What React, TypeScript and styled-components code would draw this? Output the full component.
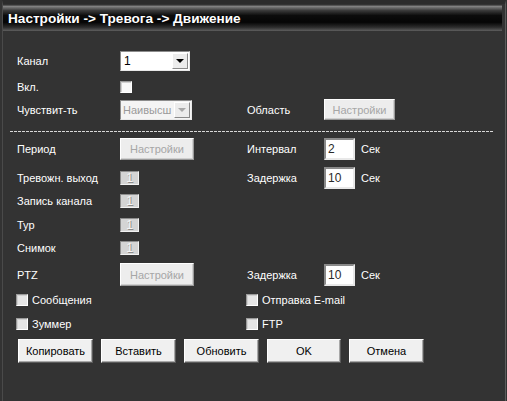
import styled, { createGlobalStyle } from 'styled-components';

const GlobalStyle = createGlobalStyle`
  html, body {
    margin: 0;
    padding: 0;
    background: #333333;
  }
  body {
    font-family: 'Liberation Sans', Arial, sans-serif;
    font-size: 11px;
    color: #ffffff;
  }
`;

type RowSpec = { top: number; height: number };

const TextRow = ({
  label,
  top,
  height,
  children,
  right,
}: RowSpec & { label: string; children?: React.ReactNode; right?: React.ReactNode }) => (
  <Row $top={top} $height={height}>
    <Label>{label}</Label>
    <Cell>{children}</Cell>
    {right}
  </Row>
);

const SecondsField = ({ label, value }: { label: string; value: string }) => (
  <>
    <Label>{label}</Label>
    <Cell>
      <NumberInput defaultValue={value} />
      <Unit>Сек</Unit>
    </Cell>
  </>
);

const MiniBox = () => <Mini>1</Mini>;

const App = () => {
  return (
    <>
      <GlobalStyle />
      <Window>
        <TitleBar>Настройки -&gt; Тревога -&gt; Движение</TitleBar>
        <Form>
          <TextRow label="Канал" top={0} height={20}>
            <Select>
              <SelectValue>1</SelectValue>
              <ArrowButton>
                <Arrow />
              </ArrowButton>
            </Select>
          </TextRow>
          <TextRow label="Вкл." top={9} height={13}>
            <CheckBox />
          </TextRow>
          <TextRow
            label="Чувствит-ть"
            top={6}
            height={20}
            right={
              <>
                <Label>Область</Label>
                <Cell>
                  <Button $width={71} $height={21} disabled>
                    Настройки
                  </Button>
                </Cell>
              </>
            }
          >
            <Select $disabled>
              <SelectValue $disabled>Наивысш</SelectValue>
              <ArrowButton>
                <Arrow $disabled />
              </ArrowButton>
            </Select>
          </TextRow>

          <Divider />

          <TextRow
            label="Период"
            top={6}
            height={22}
            right={<SecondsField label="Интервал" value="2" />}
          >
            <Button $width={74} $height={22} disabled>
              Настройки
            </Button>
          </TextRow>
          <TextRow
            label="Тревожн. выход"
            top={7}
            height={22}
            right={<SecondsField label="Задержка" value="10" />}
          >
            <MiniBox />
          </TextRow>
          <TextRow label="Запись канала" top={5} height={14}>
            <MiniBox />
          </TextRow>
          <TextRow label="Тур" top={10} height={13}>
            <MiniBox />
          </TextRow>
          <TextRow label="Снимок" top={10} height={14}>
            <MiniBox />
          </TextRow>
          <TextRow
            label="PTZ"
            top={8}
            height={23}
            right={<SecondsField label="Задержка" value="10" />}
          >
            <Button $width={74} $height={23} disabled>
              Настройки
            </Button>
          </TextRow>

          <CheckRow $top={8}>
            <CheckLabel>
              <CheckBox $shade />
              Сообщения
            </CheckLabel>
            <CheckLabel>
              <CheckBox $shade />
              Отправка E-mail
            </CheckLabel>
          </CheckRow>
          <CheckRow $top={12}>
            <CheckLabel>
              <CheckBox $shade />
              Зуммер
            </CheckLabel>
            <CheckLabel>
              <CheckBox $shade />
              FTP
            </CheckLabel>
          </CheckRow>

          <ButtonBar>
            <Button $width={75} $height={24}>Копировать</Button>
            <Button $width={75} $height={24}>Вставить</Button>
            <Button $width={75} $height={24}>Обновить</Button>
            <Button $width={74} $height={24}>OK</Button>
            <Button $width={75} $height={24}>Отмена</Button>
          </ButtonBar>
        </Form>
      </Window>
    </>
  );
};

export default App;

const Window = styled.div`
  box-sizing: border-box;
  width: 504px;
  height: 401px;
  margin-left: 2px;
  border-left: 1px solid #4a4a4a;
  border-right: 1px solid #5c5c5c;
  border-top: 4px solid #2c2c2c;
  background: #333333;
  overflow: hidden;
`;

const TitleBar = styled.div`
  height: 25px;
  margin-top: 1px;
  margin-right: 3px;
  padding-left: 5px;
  display: flex;
  align-items: center;
  border-top: 1px solid #555;
  background: linear-gradient(
    to bottom,
    #8a8a8a 0%,
    #3a3a3a 18%,
    #0c0c0c 38%,
    #050505 65%,
    #2c2c2c 85%,
    #5e5e5e 100%
  );
  color: #ffffff;
  font-weight: bold;
  font-size: 13.6px;
  white-space: nowrap;
`;

const Form = styled.div`
  padding: 20px 0 0 14px;
  display: flex;
  flex-direction: column;
`;

const Row = styled.div<{ $top: number; $height: number }>`
  display: grid;
  grid-template-columns: 103px 127px 77px auto;
  align-items: center;
  height: ${(p) => p.$height}px;
  margin-top: ${(p) => p.$top}px;
`;

const Label = styled.span`
  white-space: nowrap;
  color: #ffffff;
`;

const Cell = styled.div`
  display: flex;
  align-items: center;
  gap: 6px;
`;

const Select = styled.div<{ $disabled?: boolean }>`
  box-sizing: border-box;
  width: ${(p) => (p.$disabled ? 72 : 70)}px;
  height: 20px;
  display: flex;
  align-items: center;
  background: ${(p) => (p.$disabled ? '#f4f4f4' : '#ffffff')};
  border: 1px solid;
  border-color: #8c8c8c #e8e8e8 #e8e8e8 #8c8c8c;
  padding: 1px;
`;

const SelectValue = styled.span<{ $disabled?: boolean }>`
  flex: 1;
  min-width: 0;
  white-space: nowrap;
  padding-left: ${(p) => (p.$disabled ? 1 : 2)}px;
  font-size: ${(p) => (p.$disabled ? 11 : 12)}px;
  color: ${(p) => (p.$disabled ? '#9a9a9a' : '#000000')};
`;

const ArrowButton = styled.span`
  box-sizing: border-box;
  width: 16px;
  height: 16px;
  flex-shrink: 0;
  display: flex;
  align-items: center;
  justify-content: center;
  background: #ececec;
  border: 1px solid;
  border-color: #ffffff #8a8a8a #8a8a8a #ffffff;
`;

const Arrow = styled.span<{ $disabled?: boolean }>`
  width: 0;
  height: 0;
  border-left: 4px solid transparent;
  border-right: 4px solid transparent;
  border-top: 4px solid ${(p) => (p.$disabled ? '#a8a8a8' : '#000000')};
`;

const CheckBox = styled.span<{ $shade?: boolean }>`
  box-sizing: border-box;
  display: inline-block;
  width: 12px;
  height: 12px;
  flex-shrink: 0;
  background: ${(p) => (p.$shade ? '#e6e6e6' : '#f8f8f8')};
  border: 1px solid;
  border-color: #9a9a9a #ffffff #ffffff #9a9a9a;
  box-shadow: inset 1px 1px 0 #d0d0d0;
`;

const Button = styled.button<{ $width: number; $height: number }>`
  box-sizing: border-box;
  width: ${(p) => p.$width}px;
  height: ${(p) => p.$height}px;
  padding: 0;
  font-family: 'Liberation Sans', Arial, sans-serif;
  font-size: 11px;
  color: #000000;
  background: #f0f0f0;
  border: 1px solid;
  border-color: #ffffff #5a5a5a #5a5a5a #ffffff;
  box-shadow: inset -1px -1px 0 #a8a8a8;

  &:disabled {
    color: #a6a6a6;
    background: #ededed;
    border-color: #ffffff #9a9a9a #9a9a9a #ffffff;
    box-shadow: inset -1px -1px 0 #cfcfcf;
  }
`;

const NumberInput = styled.input`
  box-sizing: border-box;
  width: 31px;
  height: 22px;
  padding: 0 0 0 2px;
  font-family: 'Liberation Sans', Arial, sans-serif;
  font-size: 12px;
  color: #2a2a2a;
  background: #ffffff;
  border: 2px solid;
  border-color: #8a8a8a #e8e8e8 #e8e8e8 #8a8a8a;
  outline: none;
`;

const Unit = styled.span`
  color: #ffffff;
`;

const Mini = styled.span`
  box-sizing: border-box;
  width: 19px;
  height: 14px;
  display: flex;
  align-items: center;
  justify-content: center;
  font-size: 12px;
  color: #f6f6f6;
  text-shadow: 1px 1px 0 #8a8a8a;
  background: #d4d4d4;
  border: 1px solid;
  border-color: #8e8e8e #f2f2f2 #f2f2f2 #8e8e8e;
`;

const Divider = styled.div`
  margin: 12px 0 0 -7px;
  width: 483px;
  height: 1px;
  background-image: repeating-linear-gradient(
    to right,
    #d8d8d8 0 3px,
    transparent 3px 4px
  );
`;

const CheckRow = styled.div<{ $top: number }>`
  display: grid;
  grid-template-columns: 230px auto;
  align-items: center;
  height: 12px;
  margin-top: ${(p) => p.$top}px;
  margin-left: -1px;
`;

const CheckLabel = styled.label`
  display: flex;
  align-items: center;
  gap: 4px;
  white-space: nowrap;
  color: #ffffff;
`;

const ButtonBar = styled.div`
  display: flex;
  gap: 8px;
  margin: 9px 0 0 1px;
`;
